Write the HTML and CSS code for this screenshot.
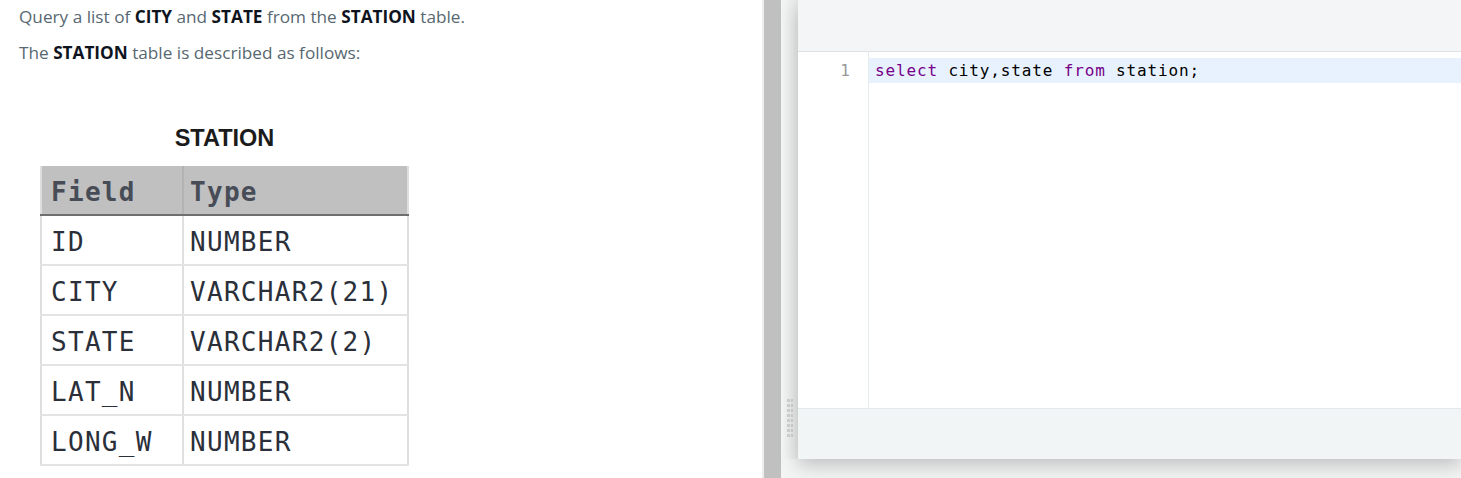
FILE: index.html
```html
<!DOCTYPE html>
<html>
<head>
<meta charset="utf-8">
<link rel="stylesheet" href="styles.css">
</head>
<body>
<div class="left">
  <p class="txt">Query a list of <b>CITY</b> and <b>STATE</b> from the <b>STATION</b> table.</p>
  <p class="txt">The <b>STATION</b> table is described as follows:</p>
  <div class="figure">
    <div class="fig-title">STATION</div>
    <table class="schema">
      <thead>
        <tr><th class="c1">Field</th><th class="c2">Type</th></tr>
      </thead>
      <tbody>
        <tr><td class="c1">ID</td><td class="c2">NUMBER</td></tr>
        <tr><td class="c1">CITY</td><td class="c2">VARCHAR2(21)</td></tr>
        <tr><td class="c1">STATE</td><td class="c2">VARCHAR2(2)</td></tr>
        <tr><td class="c1">LAT_N</td><td class="c2">NUMBER</td></tr>
        <tr><td class="c1">LONG_W</td><td class="c2">NUMBER</td></tr>
      </tbody>
    </table>
  </div>
</div>
<div class="edge"></div>
<div class="splitter"></div>
<div class="right">
  <div class="handle"><div class="grip"></div></div>
  <div class="panel">
    <div class="panel-top"></div>
    <div class="editor">
      <div class="gutter"><div class="ln">1</div></div>
      <div class="code">
        <div class="line active"><span class="kw">select</span> city,state <span class="kw">from</span> station;</div>
      </div>
    </div>
    <div class="panel-bottom"></div>
  </div>
</div>
</body>
</html>
```
FILE: styles.css
```css
html, body {
  margin: 0;
  padding: 0;
}
body {
  width: 1461px;
  height: 478px;
  overflow: hidden;
  display: flex;
  background: #fff;
}
.left {
  width: 743px;
  padding: 4px 0 0 19px;
  display: flex;
  flex-direction: column;
  gap: 11px;
  font-family: "Open Sans", "Liberation Sans", sans-serif;
}
.txt {
  margin: 0;
  font-size: 17.2px;
  line-height: 25px;
  color: #576871;
}
.txt b {
  color: #0e141e;
  font-weight: 700;
}
.figure {
  margin: 48px 0 0 21px;
  width: 369px;
  display: flex;
  flex-direction: column;
  align-items: center;
}
.fig-title {
  font-family: "Liberation Sans", Arial, sans-serif;
  font-weight: 700;
  font-size: 23.5px;
  line-height: 28px;
  color: #1b1b1b;
  margin-bottom: 14px;
}
.schema {
  width: 369px;
  table-layout: fixed;
  border-collapse: collapse;
  font-family: "DejaVu Sans Mono", monospace;
  font-size: 26px;
  letter-spacing: 1.3px;
  color: #2a2f3a;
  border-left: 2px solid #dedede;
  border-right: 2px solid #dedede;
}
.schema th, .schema td {
  height: 45px;
  padding: 3px 0 0 0;
  text-align: left;
  vertical-align: middle;
  white-space: nowrap;
  border-bottom: 2px solid #e3e3e3;
}
.schema th {
  background: #c0c0c0;
  color: #474c57;
  font-weight: 700;
  border-bottom: 2px solid #6e6e6e;
}
.schema .c1 {
  width: 131px;
  padding-left: 9px;
  border-right: 2px solid #e0e0e0;
}
.schema th.c1 {
  border-right: 2px solid #b3b3b3;
}
.schema .c2 {
  padding-left: 6px;
}
.edge {
  width: 2px;
  background: #eeeeee;
}
.splitter {
  width: 17px;
  background: #c0c0c0;
}
.right {
  flex: 1;
  display: flex;
  background: #f3f4f4;
  padding-bottom: 19px;
}
.handle {
  width: 17px;
  display: flex;
  flex-direction: column;
  justify-content: flex-end;
  align-items: center;
  padding-bottom: 22px;
  background: linear-gradient(to right, #f4f5f5, #e9ebeb);
}
.grip {
  width: 6px;
  height: 38px;
  margin-left: 1px;
  background:
    linear-gradient(to right, transparent 2.5px, #eceeee 2.5px 3.5px, transparent 3.5px),
    repeating-linear-gradient(to bottom, #d2d2d2 0 3px, transparent 3px 5px);
}
.panel {
  flex: 1;
  display: flex;
  flex-direction: column;
  background: #fff;
  box-shadow: 0 6px 18px rgba(0, 0, 0, 0.22);
}
.panel-top {
  height: 51px;
  background: #f3f5f6;
  border-bottom: 1px solid #dde1e3;
}
.editor {
  flex: 1;
  display: flex;
  padding-top: 6px;
  background: #fff;
  font-family: "DejaVu Sans Mono", monospace;
  font-size: 16px;
  line-height: 25px;
}
.gutter {
  width: 70px;
  border-right: 1px solid #e6ebed;
  margin-top: -6px;
  padding-top: 6px;
}
.ln {
  text-align: right;
  padding-right: 18px;
  color: #999;
}
.code {
  flex: 1;
}
.line {
  padding-left: 6px;
  letter-spacing: 0.85px;
  color: #000;
}
.line.active {
  background: #e8f2fe;
}
.kw {
  color: #770088;
}
.panel-bottom {
  height: 50px;
  background: #f2f5f6;
  border-top: 1px solid #e1e9ec;
}
```
